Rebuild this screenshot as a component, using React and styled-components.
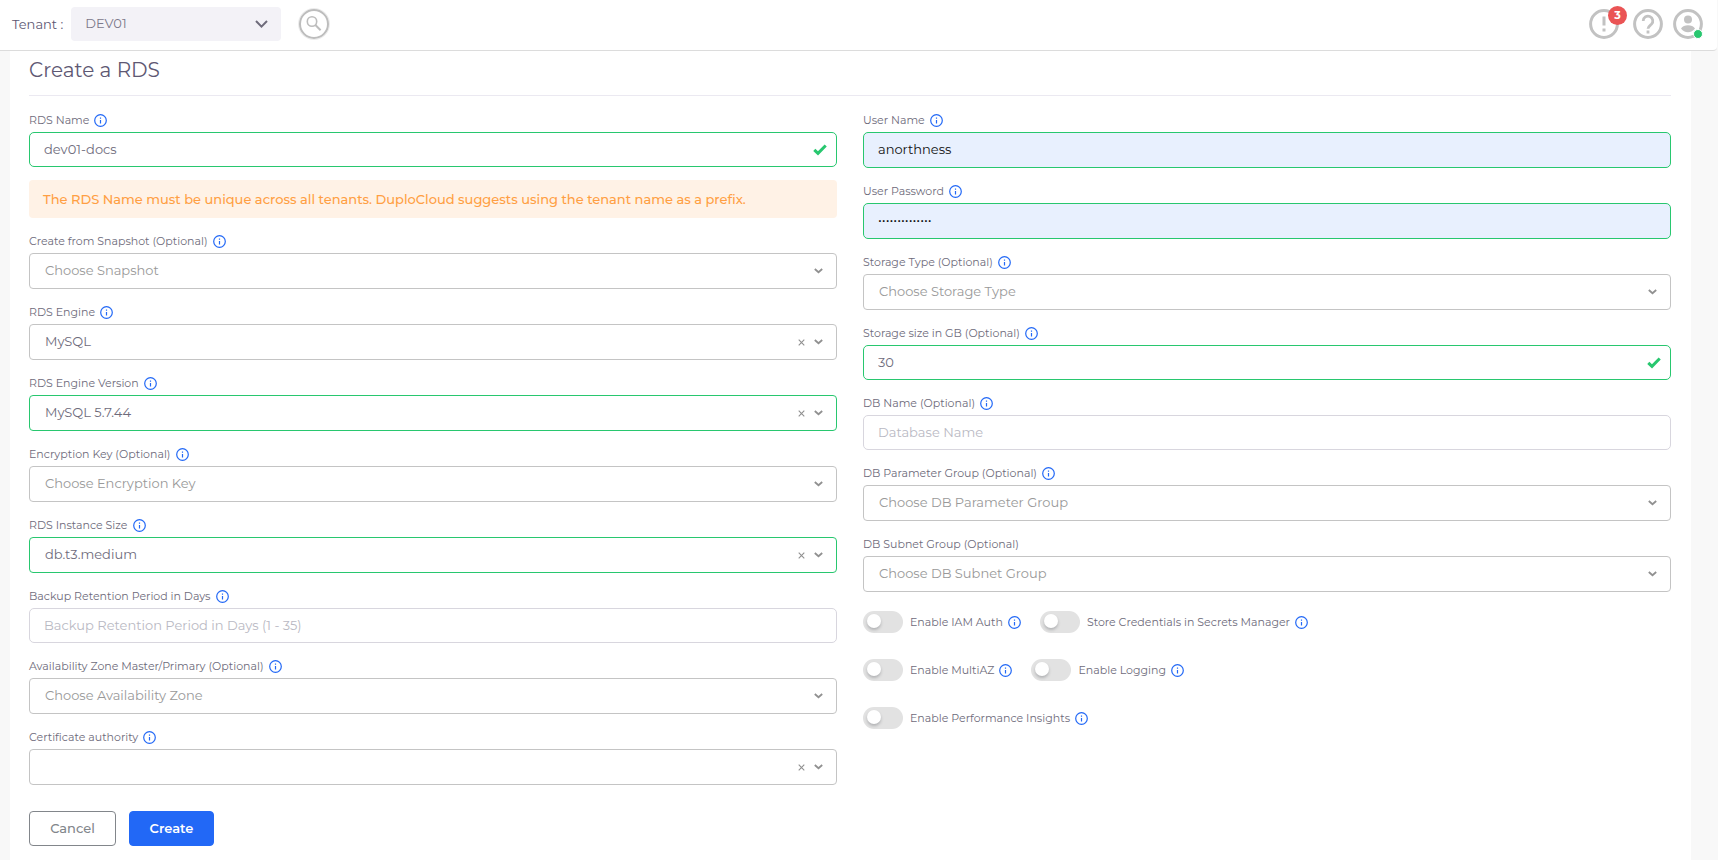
import React, { useId, useState } from "react";
import styled, { createGlobalStyle } from "styled-components";

const GlobalStyle = createGlobalStyle`
  *, *::before, *::after { box-sizing: border-box; }
  body {
    margin: 0;
    background: #f8f8f8;
    color: #6e6b7b;
    font-family: Montserrat, Inter, "Open Sans", sans-serif;
    font-size: 13px;
  }
  button, input, select { font-family: inherit; font-size: inherit; }
`;

const Page = styled.div`
  display: flex;
  flex-direction: column;
  min-height: 100vh;
`;

const TopBar = styled.header`
  display: flex;
  align-items: center;
  justify-content: space-between;
  height: 51px;
  margin-right: 1px;
  padding: 0 14px 3px 12px;
  background: #fff;
  border-bottom: 1px solid #dcdcdc;
  border-bottom-right-radius: 4px;
`;

const BarGroup = styled.div`
  display: flex;
  align-items: center;
  gap: ${(p) => p.$gap}px;
`;

const TenantLabel = styled.label`
  color: #5e5873;
`;

const TenantBox = styled.div`
  position: relative;
  width: 210px;
  margin-right: 10px;
`;

const TenantSelect = styled.select`
  appearance: none;
  display: block;
  width: 100%;
  height: 34px;
  padding: 0 36px 2px 14px;
  border: 0;
  border-radius: 4px;
  background: #f3f2f7;
  color: #7c798a;
`;

const TenantArrow = styled.svg`
  position: absolute;
  right: 13px;
  top: 11px;
  pointer-events: none;
`;

const IconButton = styled.button`
  position: relative;
  display: flex;
  width: 30px;
  height: 30px;
  padding: 0;
  border: 0;
  border-radius: 50%;
  background: none;
  cursor: pointer;
`;

const AlertsButton = styled(IconButton)`
  margin-right: 4px;
`;

const SearchButton = styled(IconButton)`
  align-items: center;
  justify-content: center;
  border: 2px solid #bdbdbd;
  box-shadow: 0 0 0 1px #ececec;
`;

const Badge = styled.span`
  position: absolute;
  left: 19px;
  top: -3px;
  width: 19px;
  height: 19px;
  border-radius: 50%;
  background: #ea5455;
  color: #fff;
  font-size: 11px;
  font-weight: 700;
  line-height: 18px;
  text-align: center;
`;

const StatusDot = styled.span`
  position: absolute;
  right: 0;
  bottom: 0;
  width: 10px;
  height: 10px;
  border: 1px solid #fff;
  border-radius: 50%;
  background: #28c76f;
`;

const Card = styled.main`
  flex: 1;
  margin: 0 27px 0 10px;
  padding: 0 20px 13px 19px;
  background: #fff;
`;

const Title = styled.h1`
  margin: 0;
  padding: 6px 0 12px;
  border-bottom: 1px solid #ebe9f1;
  color: #5e5873;
  font-size: 20px;
  font-weight: 400;
  line-height: 26px;
`;

const Columns = styled.div`
  display: grid;
  grid-template-columns: 1fr 1fr;
  gap: 26px;
  padding-top: 14px;
`;

const Column = styled.div`
  display: flex;
  flex-direction: column;
  gap: 13px;
`;

const Field = styled.div`
  display: flex;
  flex-direction: column;
  gap: 2px;
`;

const LabelRow = styled.div`
  display: flex;
  align-items: center;
  gap: 5px;
  height: 20px;
`;

const Label = styled.label`
  color: #6e6b7b;
  font-size: 11px;
  line-height: 20px;
`;

const InfoButton = styled.button`
  display: flex;
  padding: 0;
  border: 0;
  background: none;
  cursor: pointer;
`;

const ControlBox = styled.div`
  display: grid;
  align-items: center;
  & > * { grid-area: 1 / 1; }
`;

const borderFor = (p) => (p.$valid ? "#28c76f" : p.$soft ? "#d8d6de" : "#c4c4c4");

const TextInput = styled.input`
  width: 100%;
  height: ${(p) => (p.$filled ? 36 : 35)}px;
  padding: 0 36px 2px 14px;
  border: 1px solid ${borderFor};
  border-radius: 5px;
  background: ${(p) => (p.$filled ? "#e8f0fe" : "#fff")};
  color: ${(p) => (p.$filled ? "#111" : "#6e6b7b")};
  &::placeholder { color: #b9b9c3; opacity: 1; }
`;

const SelectInput = styled.select`
  appearance: none;
  width: 100%;
  height: 36px;
  padding: 0 56px 2px 15px;
  border: 1px solid ${borderFor};
  border-radius: 4px;
  background: #fff;
  color: ${(p) => (p.$empty ? "#999" : "#6e6b7b")};
`;

const Adornments = styled.div`
  display: flex;
  align-items: center;
  justify-self: end;
  gap: 9px;
  padding-right: ${(p) => p.$inset}px;
  pointer-events: none;
`;

const ClearButton = styled.button`
  display: flex;
  padding: 0;
  border: 0;
  background: none;
  pointer-events: auto;
  cursor: pointer;
`;

const Alert = styled.div`
  padding: 0 14px;
  border-radius: 4px;
  background: #fff2e6;
  color: #ff9f43;
  font-weight: 500;
  line-height: 38px;
`;

const Toggles = styled.div`
  display: flex;
  flex-direction: column;
  gap: 26px;
  padding-top: 6px;
`;

const ToggleRow = styled.div`
  display: flex;
  gap: 19px;
`;

const ToggleItem = styled.div`
  display: flex;
  align-items: center;
  gap: 5px;
  height: 22px;
`;

const Switch = styled.input`
  appearance: none;
  width: 40px;
  height: 22px;
  margin: 0 2px 0 0;
  padding: 3px 4px;
  border-radius: 11px;
  background: #e2e2e2;
  cursor: pointer;
  &::before {
    content: "";
    display: block;
    width: 14px;
    height: 14px;
    border-radius: 50%;
    background: #fff;
    box-shadow: 0 2px 3px rgba(34, 41, 47, 0.25);
  }
  &:checked { background: #2268f6; }
  &:checked::before { margin-left: auto; }
`;

const Actions = styled.div`
  display: flex;
  gap: 13px;
  padding-top: 26px;
`;

const ActionButton = styled.button`
  width: ${(p) => (p.$primary ? 85 : 87)}px;
  height: 35px;
  padding: 0 0 2px;
  border: 1px solid ${(p) => (p.$primary ? "#2268f6" : "#82868b")};
  border-radius: 4px;
  background: ${(p) => (p.$primary ? "#2268f6" : "#fff")};
  color: ${(p) => (p.$primary ? "#fff" : "#82868b")};
  font-weight: ${(p) => (p.$primary ? 600 : 500)};
  cursor: pointer;
`;

function Info({ about }) {
  return (
    <InfoButton type="button" aria-label={`About ${about}`}>
      <svg width="13" height="13" viewBox="0 0 13 13" fill="none" stroke="#2268f6">
        <circle cx="6.5" cy="6.5" r="5.8" strokeWidth="1.2" />
        <path d="M6.5 6v3.4M6.5 3.6v1.2" strokeWidth="1.2" />
      </svg>
    </InfoButton>
  );
}

function Check() {
  return (
    <svg width="14" height="12" viewBox="0 0 14 12" fill="none" stroke="#28c76f" strokeWidth="3">
      <path d="M1.3 5.8 5 9.4 12.7 1.5" />
    </svg>
  );
}

function Chevron() {
  return (
    <svg width="9" height="6" viewBox="0 0 9 6" fill="none" stroke="#909090" strokeWidth="1.8">
      <path d="M.8 1 4.5 4.2 8.2 1" />
    </svg>
  );
}

function FieldLabel({ id, label, info = true }) {
  return (
    <LabelRow>
      <Label htmlFor={id}>{label}</Label>
      {info && <Info about={label} />}
    </LabelRow>
  );
}

function TextField({ label, check, type = "text", valid, filled, value = "", placeholder }) {
  const id = useId();
  return (
    <Field>
      <FieldLabel id={id} label={label} />
      <ControlBox>
        <TextInput
          id={id}
          type={type}
          defaultValue={value}
          placeholder={placeholder}
          $valid={valid}
          $filled={filled}
          $soft
        />
        {check && (
          <Adornments $inset={10}>
            <Check />
          </Adornments>
        )}
      </ControlBox>
    </Field>
  );
}

function SelectField({ label, info, value = "", placeholder = "", valid, clearable }) {
  const id = useId();
  const [current, setCurrent] = useState(value);
  return (
    <Field>
      <FieldLabel id={id} label={label} info={info} />
      <ControlBox>
        <SelectInput
          id={id}
          value={current}
          onChange={(e) => setCurrent(e.target.value)}
          $valid={valid}
          $empty={!current}
        >
          <option value="">{placeholder}</option>
          {value && <option value={value}>{value}</option>}
        </SelectInput>
        <Adornments $inset={14}>
          {clearable && (
            <ClearButton type="button" aria-label={`Clear ${label}`} onClick={() => setCurrent("")}>
              <svg width="7" height="7" viewBox="0 0 7 7" stroke="#909090" strokeWidth="1.1">
                <path d="M.7.7l5.6 5.6M6.3.7.7 6.3" />
              </svg>
            </ClearButton>
          )}
          <Chevron />
        </Adornments>
      </ControlBox>
    </Field>
  );
}

function Toggle({ label }) {
  const id = useId();
  return (
    <ToggleItem>
      <Switch id={id} type="checkbox" role="switch" />
      <Label htmlFor={id}>{label}</Label>
      <Info about={label} />
    </ToggleItem>
  );
}

function Header() {
  return (
    <TopBar>
      <BarGroup $gap={8}>
        <TenantLabel htmlFor="tenant">Tenant :</TenantLabel>
        <TenantBox>
          <TenantSelect id="tenant" defaultValue="DEV01">
            <option>DEV01</option>
          </TenantSelect>
          <TenantArrow width="13" height="12" viewBox="0 0 13 12" fill="none" stroke="#6e6b7b" strokeWidth="2">
            <path d="M1 3l5.5 5.6L12 3" />
          </TenantArrow>
        </TenantBox>
        <SearchButton type="button" aria-label="Search">
          <svg width="16" height="16" viewBox="0 0 16 16" fill="none" stroke="#bdbdbd">
            <circle cx="6" cy="5.5" r="4.7" strokeWidth="1.6" />
            <path d="M9.4 9l5.2 5.2" strokeWidth="2" />
          </svg>
        </SearchButton>
      </BarGroup>
      <BarGroup $gap={10}>
        <AlertsButton type="button" aria-label="Alerts">
          <svg width="30" height="30" viewBox="0 0 30 30" fill="none" stroke="#c2c2c2" strokeWidth="3">
            <circle cx="15" cy="15" r="13.4" />
            <path d="M15 7.5v9M15 19.5v3" />
          </svg>
          <Badge>3</Badge>
        </AlertsButton>
        <IconButton type="button" aria-label="Help">
          <svg width="30" height="30" viewBox="0 0 30 30" fill="none" stroke="#c2c2c2" strokeWidth="3">
            <circle cx="15" cy="15" r="13.4" />
            <path d="M10.2 12a4.8 4.8 0 1 1 8.2 3.3c-2 1.7-3.400 2.400-3.400 4.500M15 21.500v3" strokeWidth="2.800" />
          </svg>
        </IconButton>
        <IconButton type="button" aria-label="Account">
          <svg width="30" height="30" viewBox="0 0 30 30" fill="#c2c2c2">
            <circle cx="15" cy="15" r="13.4" fill="none" stroke="#c2c2c2" strokeWidth="3" />
            <circle cx="15" cy="10.500" r="4" />
            <path d="M8 19.500c1.500-2.200 4-3.300 7-3.300s5.500 1.100 7 3.300c-1.500 2.400-4.200 3.800-7 3.800s-5.500-1.400-7-3.800z" />
          </svg>
          <StatusDot />
        </IconButton>
      </BarGroup>
    </TopBar>
  );
}

export default function App() {
  return (
    <Page>
      <GlobalStyle />
      <Header />
      <Card>
        <Title>Create a RDS</Title>
        <form onSubmit={(e) => e.preventDefault()}>
          <Columns>
            <Column>
              <TextField label="RDS Name" value="dev01-docs" valid check />
              <Alert role="note">
                The RDS Name must be unique across all tenants. DuploCloud suggests using the tenant name as a prefix.
              </Alert>
              <SelectField label="Create from Snapshot (Optional)" placeholder="Choose Snapshot" />
              <SelectField label="RDS Engine" value="MySQL" clearable />
              <SelectField label="RDS Engine Version" value="MySQL 5.7.44" valid clearable />
              <SelectField label="Encryption Key (Optional)" placeholder="Choose Encryption Key" />
              <SelectField label="RDS Instance Size" value="db.t3.medium" valid clearable />
              <TextField
                label="Backup Retention Period in Days"
                placeholder="Backup Retention Period in Days (1 - 35)"
              />
              <SelectField
                label="Availability Zone Master/Primary (Optional)"
                placeholder="Choose Availability Zone"
              />
              <SelectField label="Certificate authority" clearable />
            </Column>
            <Column>
              <TextField label="User Name" value="anorthness" valid filled />
              <TextField label="User Password" type="password" value="password-12345" valid filled />
              <SelectField label="Storage Type (Optional)" placeholder="Choose Storage Type" />
              <TextField label="Storage size in GB (Optional)" value="30" valid check />
              <TextField label="DB Name (Optional)" placeholder="Database Name" />
              <SelectField label="DB Parameter Group (Optional)" placeholder="Choose DB Parameter Group" />
              <SelectField label="DB Subnet Group (Optional)" placeholder="Choose DB Subnet Group" info={false} />
              <Toggles>
                <ToggleRow>
                  <Toggle label="Enable IAM Auth" />
                  <Toggle label="Store Credentials in Secrets Manager" />
                </ToggleRow>
                <ToggleRow>
                  <Toggle label="Enable MultiAZ" />
                  <Toggle label="Enable Logging" />
                </ToggleRow>
                <ToggleRow>
                  <Toggle label="Enable Performance Insights" />
                </ToggleRow>
              </Toggles>
            </Column>
          </Columns>
          <Actions>
            <ActionButton type="button">Cancel</ActionButton>
            <ActionButton type="submit" $primary>
              Create
            </ActionButton>
          </Actions>
        </form>
      </Card>
    </Page>
  );
}
